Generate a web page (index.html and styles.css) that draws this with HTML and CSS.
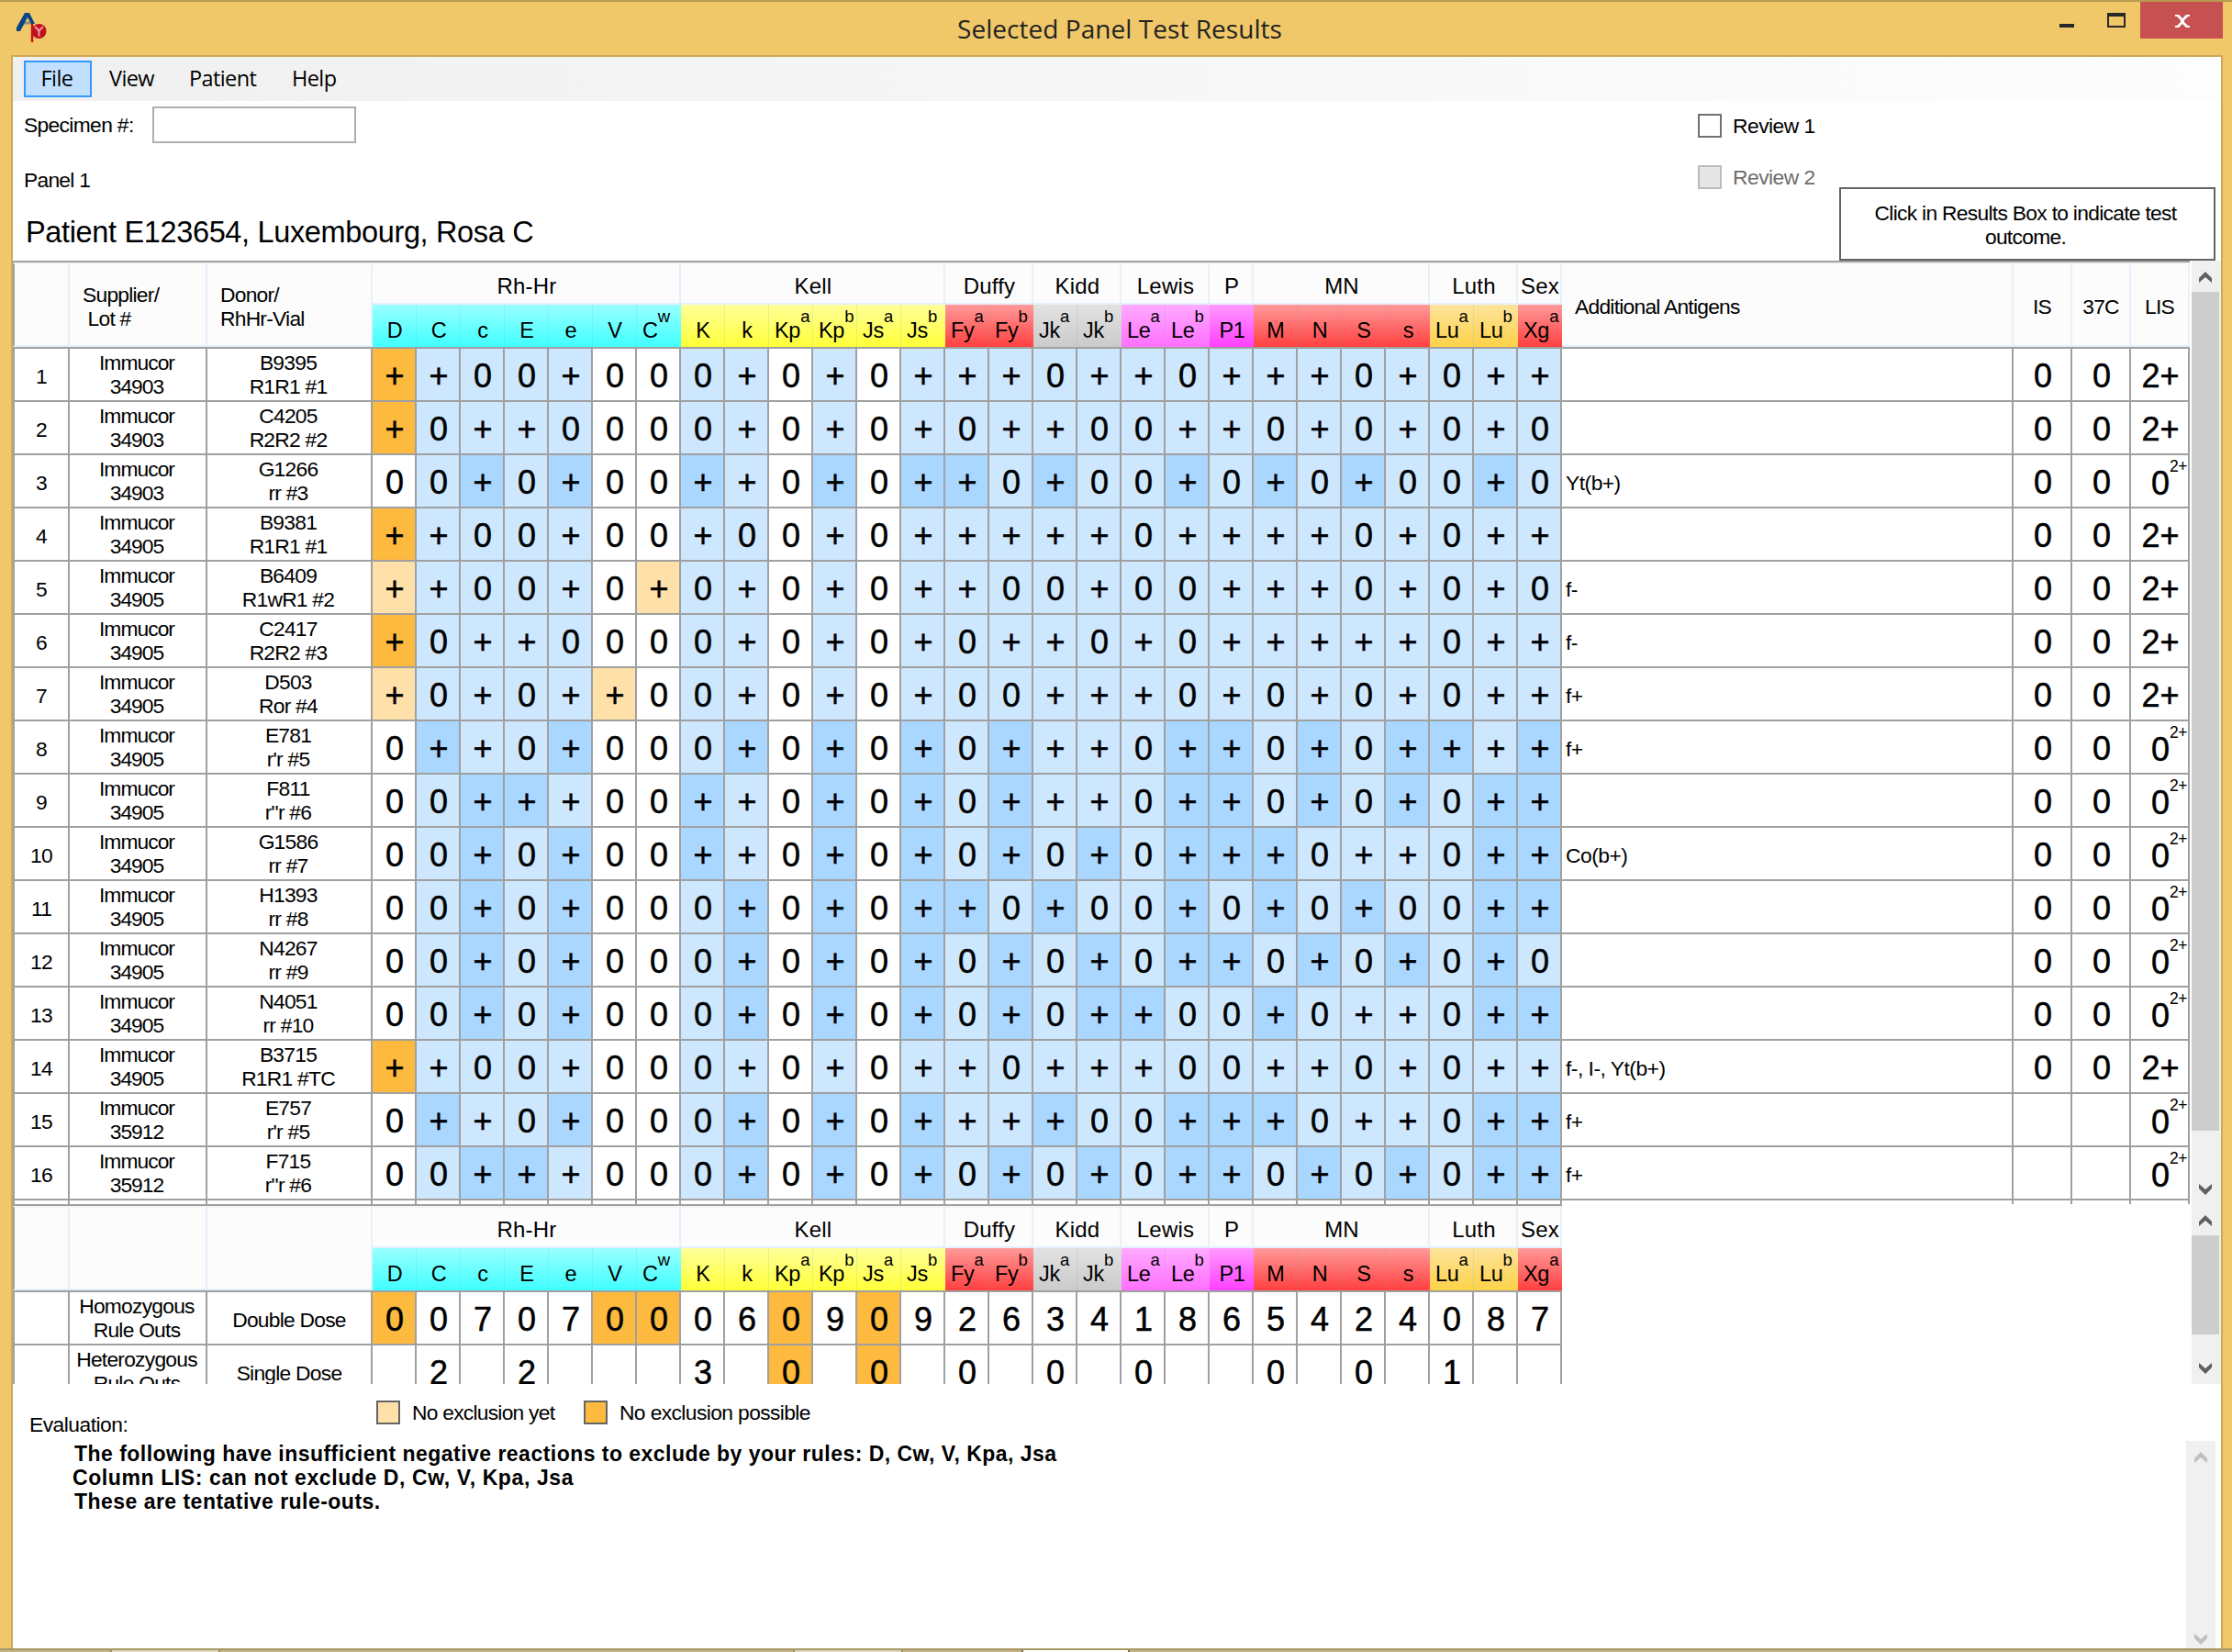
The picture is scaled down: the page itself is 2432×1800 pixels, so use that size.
FILE: index.html
```html
<!DOCTYPE html>
<html lang="en">
<head>
<meta charset="utf-8">
<title>Selected Panel Test Results</title>
<link rel="stylesheet" href="styles.css">
</head>
<body>
<div class="window">
  <header class="titlebar">
    <svg class="logo" viewBox="0 0 34 34" width="34" height="34">
      <path d="M9 11h10" stroke="#8f9176" stroke-width="3"/>
      <path d="M1 20V16L10 0H15L21 12H17L13 5L5 20Z" fill="#0a4585"/>
      <circle cx="25.5" cy="20" r="8" fill="#c0111f"/>
      <path d="M18 12v20" stroke="#c0111f" stroke-width="2.4"/>
      <path d="M21 15l4.500 4.500l4.500-4.500M25.500 19.500v6" stroke="#ec9aa0" stroke-width="2" fill="none"/>
    </svg>
    <h1 class="title">Selected Panel Test Results</h1>
    <div class="buttons">
      <svg width="90" height="40" viewBox="0 0 90 40"><path d="M2 24h16v4h-16z" fill="#282828"/><path d="M54 12h20v16h-20zM56 16v10h16v-10z" fill="#282828" fill-rule="evenodd"/></svg>
      <div class="close"><svg width="16" height="14" viewBox="0 0 16 14"><path d="M0 0h4l4 4l4-4h4v2h-2l-4 4v2l4 4h2v2h-4l-4-4l-4 4h-4v-2h2l4-4v-2l-4-4h-2z" fill="#fff"/></svg></div>
    </div>
  </header>
  <main class="client">
    <nav class="menu"><span class="item active">File</span><span class="item view">View</span><span class="item patient">Patient</span><span class="item help">Help</span></nav>
    <section class="top">
      <div class="left">
        <div class="specimen"><label>Specimen #:</label><input class="box" type="text"></div>
        <div class="panel">Panel 1</div>
        <div class="name">Patient E123654, Luxembourg, Rosa C</div>
      </div>
      <div class="reviews">
        <div class="check"><i></i>Review 1</div>
        <div class="check off"><i></i>Review 2</div>
      </div>
      <div class="hint">Click in Results Box to indicate test outcome.</div>
    </section>
    <section class="pane main">
      <div class="grid" id="results"></div>
      <div class="scroll"><svg class="up" viewBox="0 0 16 12"><path d="M1 12V7L8 0l7 7v5L8 6z"/></svg><b></b><svg class="down" viewBox="0 0 16 12"><path d="M1 0v5l7 7l7-7V0L8 6z"/></svg></div>
    </section>
    <section class="pane totals">
      <div class="grid" id="ruleouts"></div>
      <div class="scroll"><svg class="up" viewBox="0 0 16 12"><path d="M1 12V7L8 0l7 7v5L8 6z"/></svg><b></b><svg class="down" viewBox="0 0 16 12"><path d="M1 0v5l7 7l7-7V0L8 6z"/></svg></div>
    </section>
    <section class="evalhead">
      <div class="evallabel">Evaluation:</div>
      <div class="legend"><i class="pale"></i>No exclusion yet</div>
      <div class="legend second"><i class="orange"></i>No exclusion possible</div>
    </section>
    <section class="evaluation">
      <div class="message">
        <p class="m1">The following have insufficient negative reactions to exclude by your rules: D, Cw, V, Kpa, Jsa</p>
        <p class="m2">Column LIS: can not exclude D, Cw, V, Kpa, Jsa</p>
        <p class="m3">These are tentative rule-outs.</p>
      </div>
      <div class="scroll disabled"><svg class="up" viewBox="0 0 16 12"><path d="M1 12V7L8 0l7 7v5L8 6z"/></svg><svg class="down" viewBox="0 0 16 12"><path d="M1 0v5l7 7l7-7V0L8 6z"/></svg></div>
    </section>
  </main>
  <footer class="edge"><i class="t1"></i><i class="t2"></i><i class="t3"></i></footer>
</div>
<script src="grid.js"></script>
</body>
</html>
```
FILE: styles.css
```css
* { box-sizing: border-box; }
body { margin: 0; font: 22.8px/26px "Liberation Sans", Arial, sans-serif; letter-spacing: -0.75px; color: #000; }
i { font-style: normal; }
.window { width: 2432px; height: 1800px; background: #f0c869; display: flex; flex-direction: column; overflow: hidden; border-top: 2px solid #b89a51; }
.titlebar { height: 58px; flex: none; display: grid; grid-template-columns: 180px 1fr 180px; padding-right: 10px; }
.logo { margin: 12px 0 0 17px; }
.title { margin: 0; padding-left: 18px; font: 400 28px/58px "Open Sans", "Noto Sans", sans-serif; text-align: center; letter-spacing: 0.05px; color: #222; }
.buttons { display: flex; height: 40px; }
.close { width: 90px; background: #c75050; display: flex; align-items: center; justify-content: center; padding: 2px 0 0 2px; }
.client { width: 2410px; height: 1736px; flex: none; margin-left: 12px; background: #fff; border: 2px solid #cda95a; border-bottom: 0; display: flex; flex-direction: column; }
.menu { height: 48px; flex: none; background: linear-gradient(90deg, #f0f0f0, #fdfdfd); display: flex; padding: 4px 0 0 12px; font: 23.5px/36px "Open Sans", "Noto Sans", sans-serif; letter-spacing: -0.6px; }
.active { width: 74px; height: 40px; background: #c1e0ff; border: 2px solid #3399ff; text-align: center; padding-right: 2px; line-height: 35px; }
.menu .view, .menu .patient, .menu .help { padding-top: 1px; }
.view { width: 87px; margin-left: 19px; }
.patient { width: 112px; }
.top { height: 174px; flex: none; display: flex; }
.left { width: 1836px; }
.specimen { display: flex; height: 46px; padding: 6px 0 0 12px; }
.specimen label { width: 140px; padding-top: 7px; letter-spacing: -0.65px; }
.box { width: 222px; height: 40px; border: 2px solid #abadb3; background: #fff; }
.panel { padding: 27px 0 0 12px; }
.name { padding: 16px 0 0 14px; font-size: 32.5px; line-height: 56px; letter-spacing: -0.35px; }
.reviews { width: 154px; padding-top: 14px; display: flex; flex-direction: column; gap: 30px; }
.check { display: flex; gap: 12px; white-space: nowrap; line-height: 27px; height: 26px; letter-spacing: -0.5px; }
.check i { width: 26px; height: 26px; border: 2px solid #707070; flex: none; }
.off { color: #6d6d6d; }
.off i { background: #e6e6e6; border-color: #bcbcbc; }
.hint { width: 410px; height: 80px; margin-top: 94px; border: 2px solid #646464; text-align: center; padding: 13px 36px 0 32px; letter-spacing: -0.7px; }
.pane { display: flex; overflow: hidden; flex: none; }
.main { height: 1028px; }
.totals { height: 196px; }
.grid { width: 2374px; overflow: hidden; }
.head, .row { display: grid; width: 2372px; grid-template-columns: 62px 150px 180px repeat(27, 48px) 492px 64px 64px 64px; }
.totals .head, .totals .row { width: 1688px; grid-template-columns: 62px 150px 180px repeat(27, 48px); }
.head { height: 96px; grid-template-rows: 46px 46px; border-top: 2px solid #a0a0a0; border-bottom: 2px solid #a0a0a0; background: #fcfcfc; }
.h { border-right: 2px solid #e6f0fc; border-top: 2px solid #f3f3f3; }
.tall { grid-row: 1 / 3; border-bottom: 2px solid #e6f0fc; display: flex; align-items: center; padding-top: 4px; }
.tall:first-child { border-left: 2px solid #a0a0a0; }
.tall.mid { justify-content: center; }
.group { border-bottom: 2px solid #e6f0fc; text-align: center; font-size: 24px; line-height: 39px; letter-spacing: 0.2px; padding: 4px 0 0 2px; white-space: nowrap; }
.ant { grid-row: 2; display: flex; justify-content: center; font-size: 23.5px; line-height: 26px; padding: 15px 0 0 1px; letter-spacing: -0.3px; background: linear-gradient(var(--a), var(--b)); border-right: 1px solid rgba(100, 160, 200, 0.16); }
.ant.last { border-right: 0; }
.ant.sup { justify-content: flex-start; padding-left: 6px; }
.ant sup { font-size: 18.5px; line-height: 20px; margin-top: -12px; letter-spacing: 0; }
.rh { --a: #99ffff; --b: #40ffff; }
.kell { --a: #ffff99; --b: #ffff38; }
.duffy, .mn, .sex { --a: #ff9999; --b: #ff4040; }
.kidd { --a: #e2e2e2; --b: #cbcbcb; }
.lewis { --a: #ffaaff; --b: #ff70ff; }
.p { --a: #ff99ff; --b: #ff40ff; }
.luth { --a: #fde49c; --b: #fdd248; }
.row { height: 58px; }
.row > div { border-right: 2px solid #a0a0a0; border-bottom: 2px solid #a0a0a0; height: 58px; display: flex; align-items: center; justify-content: center; text-align: center; padding-top: 3px; white-space: nowrap; }
.row > div:first-child { border-left: 2px solid #a0a0a0; }
.row > .two { padding-top: 0; padding-right: 2px; white-space: pre; line-height: 26px; }
.row > .two.s { letter-spacing: -0.95px; }
.row > .v { font-size: 36px; letter-spacing: 0; padding-left: 2px; -webkit-text-stroke: 0.5px #000; }
.row > .add { justify-content: flex-start; padding-left: 4px; letter-spacing: -0.5px; }
.light { background: #cde7ff; }
.dark { background: #a9d7ff; }
.orange { background: #feba3f; }
.pale { background: #ffe0a8; }
.row > .weak { padding-left: 22px; justify-content: flex-start; align-items: flex-start; line-height: 55px; }
.weak sup { font-size: 17.5px; line-height: 20px; margin: -1px -6px 0 0; letter-spacing: -0.4px; -webkit-text-stroke: 0; }
.scroll { width: 32px; background: #f0f0f0; display: flex; flex-direction: column; align-items: center; padding-right: 2px; }
.scroll svg { width: 16px; height: 12px; fill: #606060; flex: none; }
.scroll b { width: 30px; background: #cdcdcd; }
.main .up { margin: 12px 0 10px; }
.main b { height: 914px; margin-bottom: 58px; }
.totals .up { margin: 12px 0 10px; }
.totals b { height: 108px; margin-bottom: 31px; }
.evalhead { height: 62px; flex: none; display: flex; padding-left: 18px; }
.evallabel { width: 378px; padding-top: 31px; letter-spacing: -0.5px; }
.legend { display: flex; gap: 13px; width: 226px; padding-top: 18px; white-space: nowrap; line-height: 27px; }
.second { letter-spacing: -0.6px; }
.legend i { width: 26px; height: 26px; border: 2px solid #646464; flex: none; }
.evaluation { display: flex; height: 228px; flex: none; }
.message { width: 2368px; padding: 1px 0 0 65px; font-weight: 700; font-size: 23px; letter-spacing: 0.47px; }
.message p { margin: 0; height: 26px; white-space: nowrap; }
.m1, .m3 { padding-left: 2px; }
.message .m2 { letter-spacing: 0.6px; }
.disabled { padding: 12px 0 6px; justify-content: space-between; }
.disabled svg { fill: #bfbfbf; }
.edge { height: 4px; flex: none; background: #c4b283; border-top: 2px solid #a89968; display: flex; }
.edge i { height: 2px; background: #e0d6bf; border: solid #9c8d62; border-width: 0 2px; }
.t1 { width: 120px; margin-left: 120px; }
.t2 { width: 120px; margin-left: 624px; }
.edge .t3 { width: 118px; margin-left: 129px; background: #fff; border-color: #756a50; }
```
FILE: grid.js
```js
const groups = [
  ['Rh-Hr', 'rh', ['D', 'C', 'c', 'E', 'e', 'V', 'C^w']],
  ['Kell', 'kell', ['K', 'k', 'Kp^a', 'Kp^b', 'Js^a', 'Js^b']],
  ['Duffy', 'duffy', ['Fy^a', 'Fy^b']],
  ['Kidd', 'kidd', ['Jk^a', 'Jk^b']],
  ['Lewis', 'lewis', ['Le^a', 'Le^b']],
  ['P', 'p', ['P1']],
  ['MN', 'mn', ['M', 'N', 'S', 's']],
  ['Luth', 'luth', ['Lu^a', 'Lu^b']],
  ['Sex', 'sex', ['Xg^a']],
];

// 0 = negative, + = positive, # = positive (double dose), x = no exclusion possible, y = no exclusion yet
const cells = [
  ['34903', 'B9395\nR1R1 #1', 'x+00+00 0+0+0+ ++ 0+ +0 + ++0+ 0+ +', '', '0 0 2+'],
  ['34903', 'C4205\nR2R2 #2', 'x0++000 0+0+0+ 0+ +0 0+ + 0+0+ 0+ 0', '', '0 0 2+'],
  ['34903', 'G1266\nrr #3', '00#0#00 #+0#0# #0 #0 0# 0 #0#0 0# 0', 'Yt(b+)', '0 0 w'],
  ['34905', 'B9381\nR1R1 #1', 'x+00+00 +00+0+ ++ ++ 0+ + ++0+ 0+ +', '', '0 0 2+'],
  ['34905', 'B6409\nR1wR1 #2', 'y+00+0y 0+0+0+ +0 0+ 00 + ++0+ 0+ 0', 'f-', '0 0 2+'],
  ['34905', 'C2417\nR2R2 #3', 'x0++000 0+0+0+ 0+ +0 +0 + ++++ 0+ +', 'f-', '0 0 2+'],
  ['34905', 'D503\nRor #4', 'y0+0+y0 0+0+0+ 00 ++ +0 + 0+0+ 0+ +', 'f+', '0 0 2+'],
  ['34905', "E781\nr'r #5", '0#+0#00 0#0#0# 0# ++ 0# # 0#0# #+ #', 'f+', '0 0 w'],
  ['34905', 'F811\nr"r #6', '00##+00 #+0#0# 0# ++ 0# # 0#0# 0# #', '', '0 0 w'],
  ['34905', 'G1586\nrr #7', '00#0#00 #+0#0# 0# 0# 0# # #0++ 0# #', 'Co(b+)', '0 0 w'],
  ['34905', 'H1393\nrr #8', '00#0#00 0#0#0# #0 #0 0# 0 #0#0 0# #', '', '0 0 w'],
  ['34905', 'N4267\nrr #9', '00#0#00 0#0#0# 0# 0# 0# # 0#0# 0# 0', '', '0 0 w'],
  ['34905', 'N4051\nrr #10', '00#0#00 0#0#0# 0# 0# #0 0 #0++ 0# #', '', '0 0 w'],
  ['34905', 'B3715\nR1R1 #TC', 'x+00+00 0+0+0+ +0 ++ +0 0 ++0+ 0+ +', 'f-, I-, Yt(b+)', '0 0 2+'],
  ['35912', "E757\nr'r #5", '0#+0#00 0#0#0# ++ #0 0# # #0++ 0# #', 'f+', '- - w'],
  ['35912', 'F715\nr"r #6', '00##+00 0#0#0# 0# 0# 0# # 0#0# 0# #', 'f+', '- - w'],
];
const whiteColumns = [0, 5, 6, 9, 11];

function header(full) {
  const t = full ? ['Supplier/\n Lot #', 'Donor/\nRhHr-Vial'] : ['', ''];
  let html = `<div class="h tall"></div><div class="h tall" style="white-space:pre;padding-left:14px">${t[0]}</div><div class="h tall" style="white-space:pre;padding-left:14px">${t[1]}</div>`;
  for (const [name, , list] of groups) html += `<div class="h group" style="grid-column:span ${list.length}">${name}</div>`;
  if (full) html += '<div class="h tall" style="padding-left:14px">Additional Antigens</div><div class="h tall mid">IS</div><div class="h tall mid">37C</div><div class="h tall mid">LIS</div>';
  let column = 4;
  for (const [, cls, list] of groups) {
    list.forEach((item, i) => {
      const [base, sup] = item.split('^');
      html += `<div class="ant ${cls}${sup ? ' sup' : ''}${i === list.length - 1 ? ' last' : ''}" style="grid-column:${column++}">${base}${sup ? `<sup>${sup}</sup>` : ''}</div>`;
    });
  }
  return `<div class="head">${html}</div>`;
}

function resultCell(code) {
  if (code === 'w') return '<div class="v weak">0<sup>2+</sup></div>';
  return `<div class="v">${code === '-' ? '' : code}</div>`;
}

let html = header(true);
cells.forEach(([lot, donor, codes, extra, results], n) => {
  html += `<div class="row"><div>${n + 1}</div><div class="two s">Immucor\n${lot}</div><div class="two">${donor}</div>`;
  [...codes.replace(/ /g, '')].forEach((code, i) => {
    const cls = { x: 'orange', y: 'pale', '#': 'dark' }[code] || (whiteColumns.includes(i) ? '' : 'light');
    html += `<div class="v ${cls}">${code === '0' ? '0' : '+'}</div>`;
  });
  html += `<div class="add">${extra}</div>${results.split(' ').map(resultCell).join('')}</div>`;
});
html += `<div class="row">${'<div></div>'.repeat(34)}</div>`;
document.getElementById('results').innerHTML = html;

const totals = [
  ['Homozygous\nRule Outs', 'Double Dose', 'x 0 7 0 7 x x 0 6 x 9 x 9 2 6 3 4 1 8 6 5 4 2 4 0 8 7'],
  ['Heterozygous\nRule Outs', 'Single Dose', '- 2 - 2 - - - 3 - x - x - 0 - 0 - 0 - - 0 - 0 - 1 - -'],
];
html = header(false);
for (const [kind, dose, counts] of totals) {
  html += `<div class="row"><div></div><div class="two">${kind}</div><div>${dose}</div>`;
  for (const c of counts.split(' ')) html += `<div class="v ${c === 'x' ? 'orange' : ''}">${c === 'x' ? 0 : c === '-' ? '' : c}</div>`;
  html += '</div>';
}
document.getElementById('ruleouts').innerHTML = html;
```
